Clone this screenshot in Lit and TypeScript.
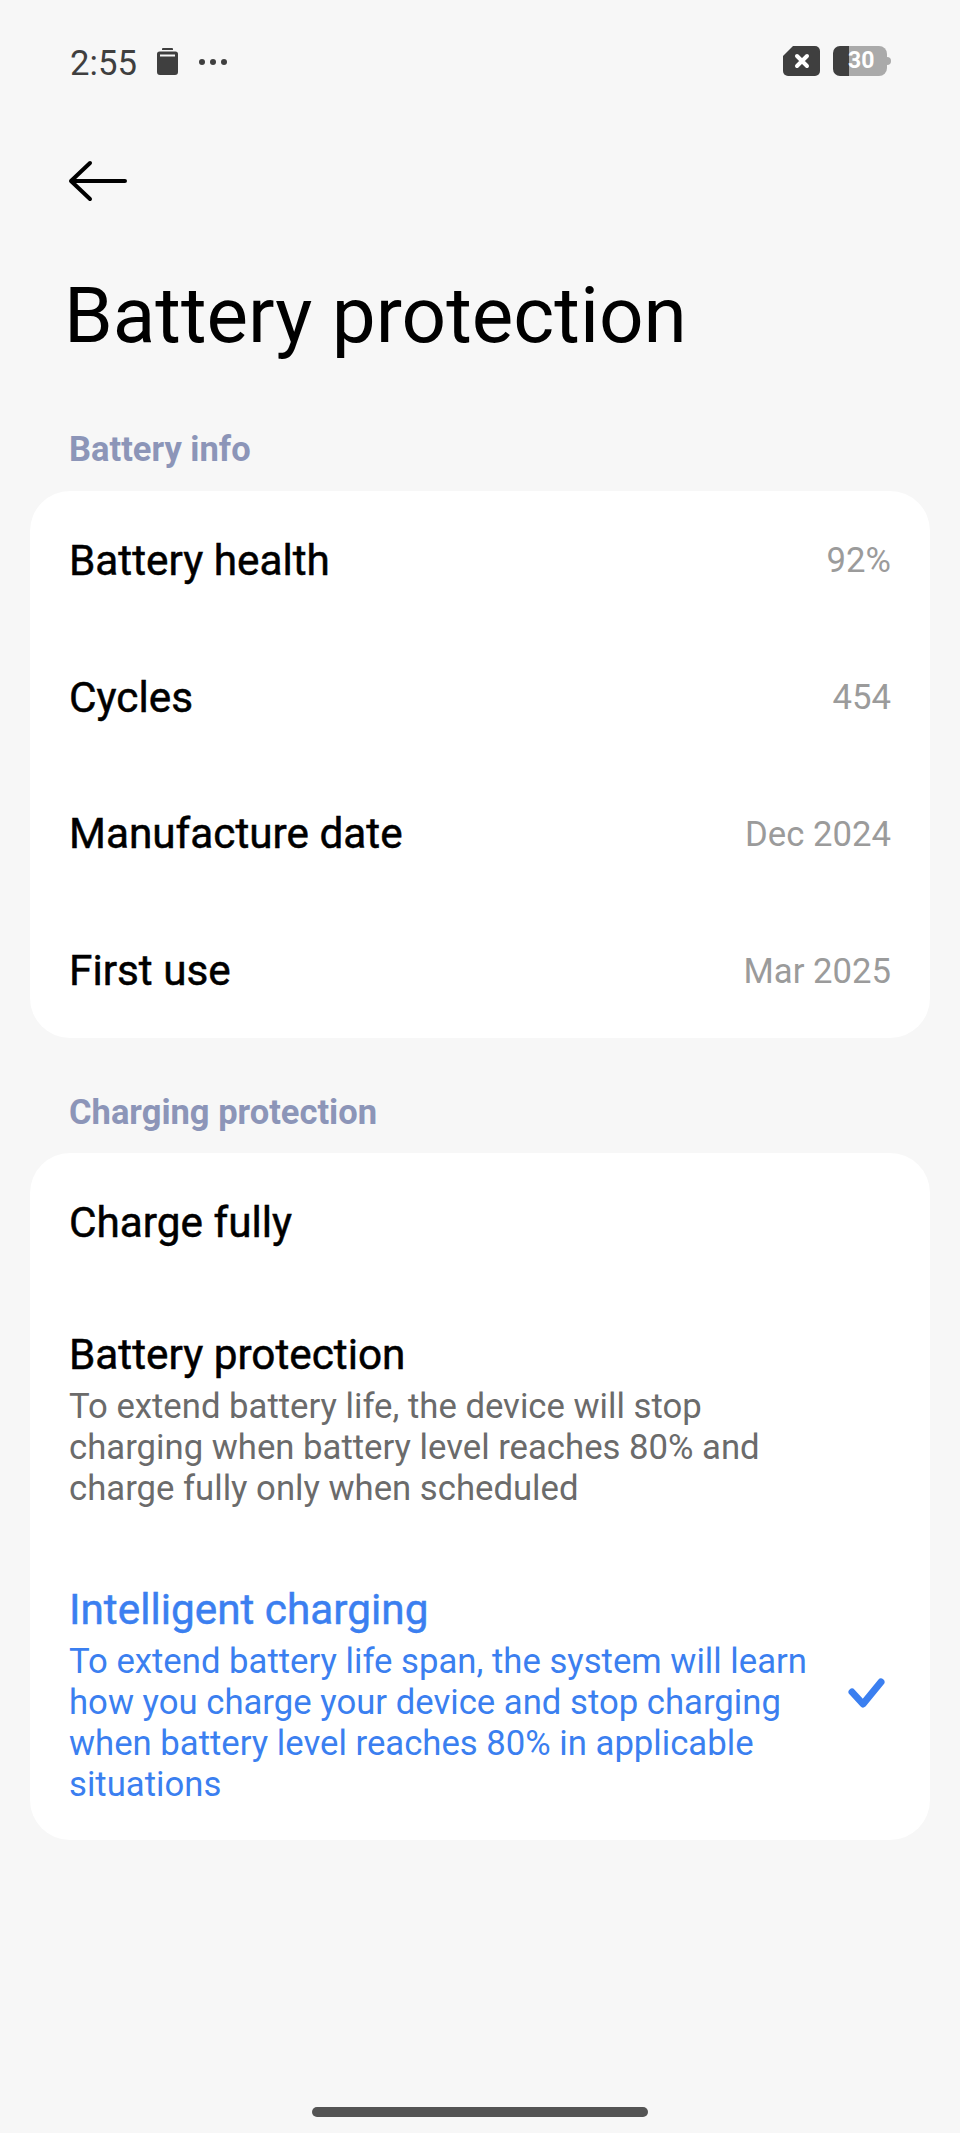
import { LitElement, html, css, svg } from 'lit';
import { customElement } from 'lit/decorators.js';

const infoRows = [
  ['Battery health', '92%'],
  ['Cycles', '454'],
  ['Manufacture date', 'Dec 2024'],
  ['First use', 'Mar 2025'],
];

const clipIcon = svg`<svg class="clip" width="21" height="27" viewBox="0 0 21 27">
  <path d="M6 0h9a1 1 0 0 1 1 1v1H5V1a1 1 0 0 1 1-1z" fill="#3f3f3f"/>
  <path d="M2.500 3.500h16a2.500 2.500 0 0 1 2.500 2.500v18a3 3 0 0 1-3 3H3a3 3 0 0 1-3-3V6a2.500 2.500 0 0 1 2.500-2.500z" fill="#3f3f3f"/>
  <rect x="3" y="6.500" width="15" height="2" fill="#f7f7f7"/>
</svg>`;

@customElement('app-root')
export class AppRoot extends LitElement {
  static styles = css`
    :host {
      display: block;
      height: 2133px;
      background: #f7f7f7;
      font-family: Roboto, "Noto Sans", sans-serif;
      color: #000;
      overflow: hidden;
    }
    .page {
      display: flex;
      flex-direction: column;
      height: 2133px;
      box-sizing: border-box;
    }
    .status {
      display: flex;
      align-items: center;
      justify-content: space-between;
      height: 46px;
      margin-top: 38px;
      padding: 0 69px 0 70px;
      color: #3f3f3f;
    }
    .status-left, .status-right {
      display: flex;
      align-items: center;
    }
    .time {
      font-size: 34.7px;
      margin: 4px 20px 0 0;
    }
    .clip { margin-top: 1px; }
    .dots {
      display: flex;
      gap: 5px;
      margin: 2px 0 0 21px;
    }
    .dots i {
      width: 6px;
      height: 6px;
      border-radius: 50%;
      background: #3f3f3f;
    }
    .batt {
      position: relative;
      width: 58px;
      height: 30px;
      margin-left: 13px;
    }
    .batt span {
      position: absolute;
      left: 15px;
      top: 0;
      line-height: 30px;
      font-size: 23px;
      font-weight: 700;
      color: #fff;
    }
    .back {
      display: block;
      margin: 76px 0 0 67px;
    }
    h1 {
      margin: 69px 0 0 64px;
      font-size: 78.3px;
      line-height: 88px;
      font-weight: 400;
    }
    .label {
      margin: 0 0 0 69px;
      font-size: 34.5px;
      line-height: 40px;
      font-weight: 700;
      color: #8c95b8;
    }
    .label.first { margin-top: 70px; }
    .label.second { margin-top: 54px; }
    .card {
      margin: 22px 30px 0;
      background: #fff;
      border-radius: 40px;
    }
    .label.second + .card { margin-top: 21px; }
    .row {
      display: flex;
      align-items: center;
      justify-content: space-between;
      height: 136.75px;
      padding: 0 39px;
    }
    .name {
      font-size: 42.3px;
      font-weight: 400;
      -webkit-text-stroke: 0.5px currentColor;
    }
    .row .name { margin-top: 2px; }
    .row .value {
      margin-top: 2px;
      font-size: 34.7px;
      font-weight: 400;
      color: #9b9b9b;
    }
    .opt { padding: 0 39px; }
    .opt.plain {
      display: flex;
      align-items: center;
      box-sizing: border-box;
      height: 137px;
      padding-top: 3px;
    }
    .opt.desc { margin-top: 41px; }
    .opt .name {
      display: block;
      line-height: 48px;
      margin-bottom: 7px;
    }
    .opt.plain .name { margin-bottom: 0; }
    .opt .text {
      font-size: 34.7px;
      line-height: 41px;
      color: #6b6b6b;
      max-width: 740px;
    }
    .opt.active {
      display: flex;
      align-items: center;
      justify-content: space-between;
      margin-top: 77px;
      padding-bottom: 35px;
      color: #3b7ff0;
    }
    .opt.active .text { color: #3b7ff0; }
    .check { margin-right: 5px; margin-top: -6px; }
    .spacer { flex: 1; }
    .home {
      align-self: center;
      width: 336px;
      height: 10px;
      margin-bottom: 16px;
      border-radius: 5px;
      background: #545454;
    }
  `;

  render() {
    return html`<div class="page">
      <div class="status">
        <div class="status-left">
          <span class="time">2:55</span>
          ${clipIcon}
          <div class="dots"><i></i><i></i><i></i></div>
        </div>
        <div class="status-right">
          <svg width="37" height="30" viewBox="0 0 37 30">
            <path d="M10 0h22a5 5 0 0 1 5 5v20a5 5 0 0 1-5 5H5a5 5 0 0 1-5-5V10z" fill="#3f3f3f"/>
            <path d="M14 10l10 10M24 10L14 20" stroke="#fff" stroke-width="4" stroke-linecap="round"/>
          </svg>
          <div class="batt">
            <svg width="58" height="30" viewBox="0 0 58 30">
              <path d="M16 0h30a8 8 0 0 1 8 8v14a8 8 0 0 1-8 8H16z" fill="#aaa"/>
              <path d="M54 11a4 4 0 0 1 0 8z" fill="#aaa"/>
              <path d="M16 0H7a7 7 0 0 0-7 7v16a7 7 0 0 0 7 7h9z" fill="#3f3f3f"/>
            </svg>
            <span>30</span>
          </div>
        </div>
      </div>

      <svg class="back" width="60" height="42" viewBox="0 0 60 42">
        <path d="M4 21h54M23 3L4 21l19 18" fill="none" stroke="#000" stroke-width="4" stroke-linecap="round" stroke-linejoin="round"/>
      </svg>

      <h1>Battery protection</h1>

      <p class="label first">Battery info</p>
      <div class="card">
        ${infoRows.map(([name, value]) => html`
          <div class="row"><span class="name">${name}</span><span class="value">${value}</span></div>
        `)}
      </div>

      <p class="label second">Charging protection</p>
      <div class="card">
        <div class="opt plain"><span class="name">Charge fully</span></div>
        <div class="opt desc">
          <span class="name">Battery protection</span>
          <div class="text">To extend battery life, the device will stop charging when battery level reaches 80% and charge fully only when scheduled</div>
        </div>
        <div class="opt active">
          <div>
            <span class="name">Intelligent charging</span>
            <div class="text">To extend battery life span, the system will learn how you charge your device and stop charging when battery level reaches 80% in applicable situations</div>
          </div>
          <svg class="check" width="38" height="32" viewBox="0 0 38 32">
            <path d="M4 15l11 12L33 5" fill="none" stroke="#3b7ff0" stroke-width="7" stroke-linecap="round" stroke-linejoin="round"/>
          </svg>
        </div>
      </div>

      <div class="spacer"></div>
      <div class="home"></div>
    </div>`;
  }
}
